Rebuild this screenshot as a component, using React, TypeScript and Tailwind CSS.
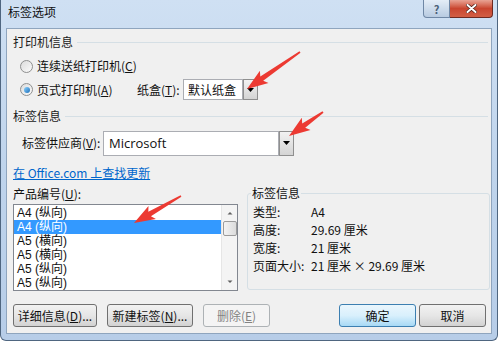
import React from "react";

const arrows = [
  { x1: 300, y1: 52, x2: 247, y2: 89 },
  { x1: 323, y1: 112, x2: 289, y2: 136 },
  { x1: 181, y1: 196, x2: 134, y2: 223 },
];

// tapered red arrow, thin tail -> wide head
const arrowPoints = (a: { x1: number; y1: number; x2: number; y2: number }) => {
  const dx = a.x2 - a.x1;
  const dy = a.y2 - a.y1;
  const len = Math.hypot(dx, dy);
  const ux = dx / len;
  const uy = dy / len;
  const nx = -uy;
  const ny = ux;
  const bx = a.x2 - ux * 18;
  const by = a.y2 - uy * 18;
  const p = (x: number, y: number) => `${x.toFixed(1)},${y.toFixed(1)}`;
  return [
    p(a.x1 + nx * 0.8, a.y1 + ny * 0.8),
    p(bx + nx * 2.6, by + ny * 2.6),
    p(bx + nx * 7.5 - ux * 3, by + ny * 7.5 - uy * 3),
    p(a.x2, a.y2),
    p(bx - nx * 7.5 - ux * 3, by - ny * 7.5 - uy * 3),
    p(bx - nx * 2.6, by - ny * 2.6),
    p(a.x1 - nx * 0.8, a.y1 - ny * 0.8),
  ].join(" ");
};

const Key = ({ k }: { k: string }) => (
  <>
    (<span className="underline">{k}</span>)
  </>
);

const Radio = ({ checked }: { checked?: boolean }) => (
  <span className="w-[13px] h-[13px] rounded-full border border-[#8e8f8f] bg-gradient-to-br from-[#dcdcdc] to-[#fbfbfb] flex items-center justify-center shrink-0">
    {checked && (
      <span className="w-[6px] h-[6px] rounded-full bg-gradient-to-br from-[#8ad3ff] to-[#1a6fb8]" />
    )}
  </span>
);

const DropButton = ({ h }: { h: string }) => (
  <div
    className={`w-[15px] ${h} border border-[#8f8f8f] bg-gradient-to-b from-[#f2f2f2] to-[#d4d4d4] flex items-center justify-center`}
  >
    <svg width="7" height="4" viewBox="0 0 7 4">
      <path d="M0 0h7L3.5 4z" fill="#000" />
    </svg>
  </div>
);

const GroupHeader = ({ title }: { title: string }) => (
  <div className="flex items-center">
    <span className="text-[#1b1b1b]">{title}</span>
    <div className="flex-1 h-px bg-[#d5dfe5] ml-[4px] mr-[3px]" />
  </div>
);

const listItems = ["A4 (纵向)", "A4 (纵向)", "A5 (横向)", "A5 (横向)", "A5 (纵向)", "A5 (纵向)"];

const info = [
  ["类型:", "A4"],
  ["高度:", "29.69 厘米"],
  ["宽度:", "21 厘米"],
  ["页面大小:", "21 厘米 × 29.69 厘米"],
];

const btn =
  "h-[23px] rounded-[3px] border flex items-center justify-center";
const normalBtn = `${btn} border-[#707070] bg-gradient-to-b from-[#f2f2f2] via-[#e6e6e6] to-[#d2d2d2]`;

export default function App() {
  return (
    <div className="w-[500px] h-[343px] bg-white relative overflow-hidden font-['Noto_Sans_CJK_SC',sans-serif] text-[12px] leading-[16px] text-[#111]">
      <div className="w-[498px] h-[341px] flex flex-col rounded-b-[6px] border border-t-0 border-[#4f6680] bg-gradient-to-b from-[#cfe0f3] via-[#bfd4ec] to-[#b7cde8] px-[5px] pb-[6px]">
        {/* title bar */}
        <div className="h-[28px] flex items-start justify-between shrink-0">
          <span className="ml-[2px] mt-[4px] text-[#111]">标签选项</span>
          <div className="flex -mr-px">
            <div className="w-[27px] h-[18px] border border-t-0 border-[#6f87a5] rounded-bl-[4px] bg-gradient-to-b from-[#e4edf7] to-[#b8cbe1] flex items-center justify-center text-[#4b5f78] text-[11px] font-bold">
              ?
            </div>
            <div className="w-[43px] h-[18px] border border-t-0 border-l-0 border-[#6e2a21] rounded-br-[4px] bg-gradient-to-b from-[#e8a394] via-[#c9452f] to-[#d25e44] flex items-center justify-center">
              <svg width="11" height="9" viewBox="0 0 11 9">
                <path d="M1.5 1L9.5 8M9.5 1L1.5 8" stroke="#4a1d16" strokeWidth="3.4" strokeLinecap="round" />
                <path d="M1.5 1L9.5 8M9.5 1L1.5 8" stroke="#fff" strokeWidth="2" strokeLinecap="round" />
              </svg>
            </div>
          </div>
        </div>

        {/* client area */}
        <div className="flex-1 border border-[#8fa5be] bg-[#f0f0f0] pl-[6px] flex flex-col">
          <div className="h-[26px] flex items-center">
            <div className="flex-1">
              <GroupHeader title="打印机信息" />
            </div>
          </div>
          <div className="h-[22px] flex items-center pl-[7px] gap-[4px]">
            <Radio />
            <span>
              连续送纸打印机<Key k="C" />
            </span>
          </div>
          <div className="h-[25px] flex items-center pl-[7px]">
            <div className="w-[117px] flex items-center gap-[4px]">
              <Radio checked />
              <span>
                页式打印机<Key k="A" />
              </span>
            </div>
            <span className="w-[46px]">
              纸盒<Key k="T" />:
            </span>
            <div className="flex items-center">
              <div className="w-[60px] h-[21px] bg-white border border-[#abadb3] flex items-center pl-[4px]">
                默认纸盒
              </div>
              <DropButton h="h-[21px]" />
            </div>
          </div>
          <div className="h-[28px] flex items-center">
            <div className="flex-1">
              <GroupHeader title="标签信息" />
            </div>
          </div>
          <div className="h-[26px] flex items-center pl-[9px]">
            <span className="w-[81px]">
              标签供应商<Key k="V" />:
            </span>
            <div className="w-[176px] h-[25px] bg-white border border-[#abadb3] flex items-center pl-[5px] font-['Open_Sans',sans-serif] text-[13px]">
              Microsoft
            </div>
            <DropButton h="h-[25px]" />
          </div>
          <div className="mt-[5px] h-[24px] flex items-center">
            <span className="text-[#0066cc] underline">在 Office.com 上查找更新</span>
          </div>

          {/* list + info */}
          <div className="h-[106px] flex">
            <div className="w-[225px] flex flex-col">
              <div className="h-[17px] flex items-center">
                <span>
                  产品编号<Key k="U" />:
                </span>
              </div>
              <div className="mt-[2px] h-[87px] border border-[#828790] bg-white flex">
                <div className="flex-1 pt-[1px] font-['Liberation_Sans','Noto_Sans_CJK_SC',sans-serif]">
                  {listItems.map((t, i) => (
                    <div
                      key={i}
                      className={`h-[14px] leading-[14px] flex items-center pl-[3px] ${i === 1 ? "bg-[#3399ff] text-white" : ""}`}
                    >
                      {t}
                    </div>
                  ))}
                </div>
                <div className="w-[16px] bg-[#f4f4f4] border-l border-[#e6e6e6] flex flex-col items-center">
                  <svg width="16" height="16" viewBox="0 0 16 16">
                    <path d="M5.5 9.5L8 7l2.5 2.5z" fill="#606060" />
                  </svg>
                  <div className="w-[14px] h-[15px] rounded-[2px] border border-[#9b9b9b] bg-gradient-to-r from-[#f3f3f3] to-[#dcdcdc]" />
                  <div className="flex-1" />
                  <svg width="16" height="16" viewBox="0 0 16 16">
                    <path d="M5.5 6.5L8 9l2.5-2.5z" fill="#606060" />
                  </svg>
                </div>
              </div>
            </div>
            <fieldset className="ml-[9px] w-[243px] h-[105px] border border-[#d5dfe5] rounded-[3px] pl-[5px] pr-[4px]">
              <legend className="px-[1px] -ml-[2px]">标签信息</legend>
              <div className="mt-[2px]">
                {info.map(([k, v]) => (
                  <div key={k} className="h-[18px] flex items-center">
                    <span className="w-[58px]">{k}</span>
                    <span>{v}</span>
                  </div>
                ))}
              </div>
            </fieldset>
          </div>

          {/* buttons */}
          <div className="mt-[13px] flex pr-[5px]">
            <div className={`${normalBtn} w-[84px]`}>
              详细信息<Key k="D" />...
            </div>
            <div className={`${normalBtn} w-[86px] ml-[10px]`}>
              新建标签<Key k="N" />...
            </div>
            <div className={`${btn} w-[67px] ml-[10px] border-[#adb2b5] bg-[#f4f4f4] text-[#838383]`}>
              删除<Key k="E" />
            </div>
            <div className="ml-auto flex gap-[3px]">
              <div className={`${btn} w-[77px] border-[#3c7fb1] bg-gradient-to-b from-[#eaf6fd] via-[#d9f0fc] to-[#a7d9f5]`}>
                确定
              </div>
              <div className={`${normalBtn} w-[67px]`}>取消</div>
            </div>
          </div>
        </div>
      </div>

      {/* red annotation arrows */}
      <svg className="absolute inset-0 pointer-events-none" width="500" height="343">
        {arrows.map((a, i) => (
          <polygon key={i} points={arrowPoints(a)} fill="#ec3a32" />
        ))}
      </svg>
    </div>
  );
}
